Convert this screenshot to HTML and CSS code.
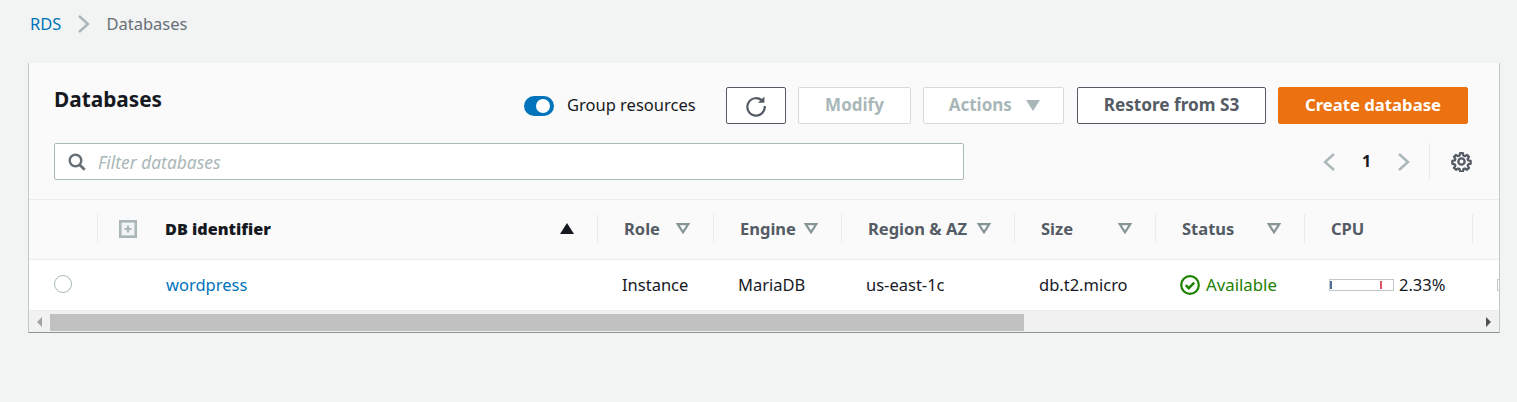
FILE: index.html
```html
<!DOCTYPE html>
<html lang="en">
<head>
	<meta charset="UTF-8">
	<title>Databases</title>
	<link rel="stylesheet" href="styles.css">
</head>
<body>
	<nav class="crumbs">
		<a href="#">RDS</a>
		<svg class="crumb-sep" width="14" height="20" viewBox="0 0 14 20"><path d="M2 2l9 8-9 8" fill="none" stroke="#aab7b8" stroke-width="2.4"/></svg>
		<span>Databases</span>
	</nav>

	<div class="card">
		<div class="head">
			<div class="head-top">
				<h1>Databases</h1>
				<div class="tools">
					<span class="toggle"><i></i></span>
					<span class="toggle-label">Group resources</span>
					<button class="btn btn-refresh">
						<svg width="22" height="22" viewBox="0 0 22 22"><path d="M17.6 6.2A8.7 8.7 0 1 0 19.7 11" fill="none" stroke="#545b64" stroke-width="2.2"/><path d="M19.4 1.4v6.4h-6.4z" fill="#545b64"/></svg>
					</button>
					<button class="btn btn-off btn-modify">Modify</button>
					<button class="btn btn-off btn-actions">Actions <svg width="14" height="11" viewBox="0 0 14 11"><path d="M0 0h14l-7 11z" fill="#aab7b8"/></svg></button>
					<button class="btn btn-restore">Restore from S3</button>
					<button class="btn btn-primary">Create database</button>
				</div>
			</div>
			<div class="head-bottom">
				<div class="filter">
					<svg width="18" height="18" viewBox="0 0 18 18"><circle cx="7.5" cy="7.5" r="5.8" fill="none" stroke="#687078" stroke-width="2.4"/><path d="M11.7 11.7l5 5" stroke="#687078" stroke-width="2.8"/></svg>
					<span>Filter databases</span>
				</div>
				<div class="pager">
					<svg width="14" height="20" viewBox="0 0 14 20"><path d="M12 2L3 10l9 8" fill="none" stroke="#aab7b8" stroke-width="2.4"/></svg>
					<b>1</b>
					<svg width="14" height="20" viewBox="0 0 14 20"><path d="M2 2l9 8-9 8" fill="none" stroke="#aab7b8" stroke-width="2.4"/></svg>
				</div>
				<div class="settings">
					<svg width="21" height="21" viewBox="0 0 20 20"><path d="M8.5 1.2h3l.5 2.5 1.6.7 2.2-1.4 2.1 2.1-1.4 2.2.7 1.6 2.5.5v3l-2.5.5-.7 1.6 1.4 2.2-2.1 2.1-2.2-1.4-1.6.7-.5 2.5h-3l-.5-2.5-1.6-.7-2.2 1.4-2.1-2.1 1.4-2.2-.7-1.6-2.5-.5v-3l2.5-.5.7-1.6-1.4-2.2 2.1-2.1 2.2 1.4 1.6-.7z" transform="translate(1 1) scale(.9)" fill="none" stroke="#545b64" stroke-width="2.4" stroke-linejoin="round"/><circle cx="10" cy="10" r="3" fill="none" stroke="#545b64" stroke-width="2.2"/></svg>
				</div>
			</div>
		</div>

		<div class="cols cols-head">
			<div class="th th-blank"></div>
			<div class="th th-id">
				<svg class="expand" width="18" height="18" viewBox="0 0 18 18"><rect x="1.3" y="1.3" width="15.4" height="15.4" fill="#f2f3f3" stroke="#aab7b8" stroke-width="2.6"/><path d="M9 5.5v7M5.5 9h7" stroke="#aab7b8" stroke-width="2.2"/></svg>
				<strong>DB identifier</strong>
				<svg class="caret" width="14" height="11" viewBox="0 0 14 11"><path d="M0 11L7 0l7 11z" fill="#16191f"/></svg>
			</div>
			<div class="th">Role <svg class="caret" width="14" height="11" viewBox="0 0 14 11"><path d="M1.7 1.1h10.6L7 9.3z" fill="none" stroke="#879596" stroke-width="2.2"/></svg></div>
			<div class="th">Engine <svg class="caret" width="14" height="11" viewBox="0 0 14 11"><path d="M1.7 1.1h10.6L7 9.3z" fill="none" stroke="#879596" stroke-width="2.2"/></svg></div>
			<div class="th">Region &amp; AZ <svg class="caret" width="14" height="11" viewBox="0 0 14 11"><path d="M1.7 1.1h10.6L7 9.3z" fill="none" stroke="#879596" stroke-width="2.2"/></svg></div>
			<div class="th">Size <svg class="caret" width="14" height="11" viewBox="0 0 14 11"><path d="M1.7 1.1h10.6L7 9.3z" fill="none" stroke="#879596" stroke-width="2.2"/></svg></div>
			<div class="th">Status <svg class="caret" width="14" height="11" viewBox="0 0 14 11"><path d="M1.7 1.1h10.6L7 9.3z" fill="none" stroke="#879596" stroke-width="2.2"/></svg></div>
			<div class="th">CPU</div>
			<div class="th"></div>
		</div>

		<div class="cols cols-row">
			<div class="td td-radio"><span class="radio"></span></div>
			<div class="td td-name"><a href="#">wordpress</a></div>
			<div class="td">Instance</div>
			<div class="td">MariaDB</div>
			<div class="td">us-east-1c</div>
			<div class="td">db.t2.micro</div>
			<div class="td td-status">
				<svg width="20" height="20" viewBox="0 0 20 20"><circle cx="10" cy="10" r="8.8" fill="none" stroke="#1d8102" stroke-width="2.2"/><path d="M5.8 10.2l3 3 5.4-5.6" fill="none" stroke="#1d8102" stroke-width="2.4"/></svg>
				Available
			</div>
			<div class="td td-cpu">
				<span class="meter"><i class="low"></i><i class="high"></i></span>
				2.33%
			</div>
			<div class="td td-cut"><span class="meter"></span></div>
		</div>

		<div class="scrollbar">
			<span class="arrow arrow-left"></span>
			<span class="thumb"></span>
			<span class="arrow arrow-right"></span>
		</div>
	</div>
</body>
</html>
```

FILE: styles.css
```css
*{
	margin: 0;
	padding: 0;
	box-sizing: border-box;
}
body{
	background-color: #f2f3f3;
	color: #16191f;
	font-family: "Noto Sans", "Liberation Sans", sans-serif;
	font-size: 16.5px;
	overflow: hidden;
}
a{
	color: #0073bb;
	text-decoration: none;
}
.crumbs{
	display: flex;
	align-items: center;
	height: 24px;
	margin: 12px 0 27px 30px;
	color: #687078;
}
.crumbs a,
.crumbs span{
	padding-bottom: 2px;
}
.crumb-sep{
	margin: 0 15px 0 16px;
}
.card{
	width: 1470px;
	margin-left: 29px;
	border-bottom: 1px solid #87959a;
	background-color: #fafafa;
	box-shadow: 1px 0 0 0 rgba(0,28,36,.2), -1px 0 0 0 rgba(0,28,36,.2);
}
.head{
	height: 137px;
	padding: 24px 0 0 25px;
	border-bottom: 1px solid #eaeded;
}
.head-top{
	display: flex;
	justify-content: space-between;
	height: 37px;
	padding-right: 31px;
}
h1{
	font-size: 20.8px;
	line-height: 24px;
	font-weight: 700;
}
.tools{
	display: flex;
	align-items: center;
}
.toggle{
	display: flex;
	justify-content: flex-end;
	align-items: center;
	width: 30px;
	height: 20px;
	padding-right: 4px;
	border-radius: 10px;
	background-color: #0073bb;
}
.toggle i{
	width: 14px;
	height: 14px;
	border-radius: 50%;
	background-color: #fff;
}
.toggle-label{
	width: 172px;
	padding: 0 0 2px 13px;
}
.btn{
	height: 37px;
	margin-right: 12px;
	padding-bottom: 2px;
	border: 1px solid #545b64;
	border-radius: 2px;
	background-color: #fff;
	color: #545b64;
	font: 700 16.7px "Noto Sans", "Liberation Sans", sans-serif;
}
.btn-refresh{
	display: flex;
	justify-content: center;
	align-items: center;
	width: 60px;
	padding-bottom: 0;
}
.btn-off{
	border-color: #d5dbdb;
	color: #aab7b8;
	font-size: 17px;
}
.btn-modify{
	width: 113px;
}
.btn-actions{
	width: 141px;
	margin-right: 13px;
	padding-left: 2px;
}
.btn-actions svg{
	margin-left: 10px;
}
.btn-restore{
	width: 189px;
	font-size: 17.2px;
}
.btn-primary{
	width: 190px;
	margin-right: 0;
	border-color: #ec7211;
	background-color: #ec7211;
	color: #fff;
}
.head-bottom{
	display: flex;
	align-items: center;
	height: 37px;
	margin-top: 19px;
}
.filter{
	display: flex;
	align-items: center;
	width: 910px;
	height: 37px;
	padding-left: 13px;
	border: 1px solid #aab7b8;
	border-radius: 2px;
	background-color: #fff;
}
.filter span{
	margin-left: 12px;
	color: #aab7b8;
	font-size: 17.4px;
	font-style: italic;
}
.pager{
	display: flex;
	justify-content: space-between;
	align-items: center;
	width: 89px;
	margin-left: 358px;
	font-size: 16px;
}
.pager b{
	padding-bottom: 2px;
	font-weight: 700;
}
.settings{
	display: flex;
	justify-content: center;
	align-items: center;
	width: 64px;
	height: 37px;
	margin-left: 18px;
	border-left: 1px solid #eaeded;
}
.cols{
	display: grid;
	grid-template-columns: 68px 500px 116px 128px 173px 141px 149px 168px 27px;
	align-items: center;
}
.cols-head{
	height: 60px;
	padding-bottom: 2px;
	border-bottom: 1px solid #eaeded;
	color: #545b64;
	font-weight: 700;
}
.th{
	display: flex;
	justify-content: space-between;
	align-items: center;
	height: 29px;
	padding: 0 23px 0 26px;
	border-left: 1px solid #eaeded;
}
.th-blank{
	border-left: 0;
}
.th-id{
	justify-content: flex-start;
	padding-left: 21px;
}
.th-id strong{
	flex: 1;
	margin-left: 28px;
	color: #16191f;
	font-size: 16.2px;
}
.cols-row{
	height: 51px;
	border-bottom: 1px solid #eaeded;
	background-color: #fff;
	overflow: hidden;
}
.td{
	display: flex;
	align-items: center;
	padding: 0 0 2px 25px;
	white-space: nowrap;
}
.radio{
	width: 18px;
	height: 18px;
	border: 1px solid #aab7b8;
	border-radius: 50%;
	background-color: #fff;
}
.td-name{
	padding-left: 69px;
}
.td-status{
	color: #1d8102;
	font-size: 16.8px;
}
.td-status svg{
	margin: 2px 6px 0 0;
}
.meter{
	display: flex;
	justify-content: space-between;
	align-items: center;
	width: 65px;
	height: 12px;
	margin: 2px 5px 0 0;
	padding: 0 11px 0 0;
	border: 1px solid #c6c6cd;
}
.meter i{
	width: 2px;
	height: 8px;
}
.low{
	background-color: #4b6f96;
}
.high{
	background-color: #db5461;
}
.scrollbar{
	display: flex;
	align-items: center;
	height: 21px;
	padding-top: 1px;
	background-color: #f1f1f1;
}
.arrow{
	width: 0;
	height: 0;
	border-top: 5px solid transparent;
	border-bottom: 5px solid transparent;
}
.arrow-left{
	margin: 0 8px 0 8px;
	border-right: 5px solid #a3a3a3;
}
.thumb{
	width: 974px;
	height: 17px;
	background-color: #c1c1c1;
}
.arrow-right{
	margin-left: auto;
	margin-right: 8px;
	border-left: 5px solid #505050;
}
```
